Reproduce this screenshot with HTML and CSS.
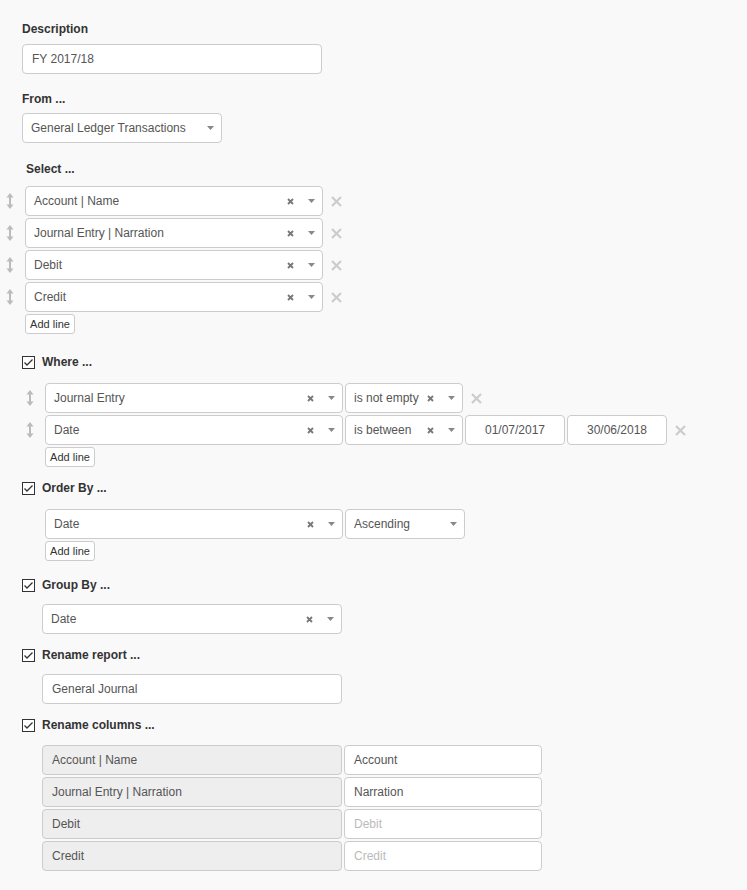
FILE: index.html
```html
<!DOCTYPE html>
<html lang="en">
<head>
    <meta charset="UTF-8">
    <title>Report query</title>
    <link rel="stylesheet" href="styles.css">
</head>
<body>
<div class="form">

    <!-- Description -->
    <div class="label">Description</div>
    <div class="field w300">FY 2017/18</div>

    <!-- From -->
    <div class="label from-label">From ...</div>
    <div class="sel w200">
        <span class="sel-text">General Ledger Transactions</span>
        <svg class="sel-arrow" width="7" height="4" viewBox="0 0 7 4"><polygon points="0,0 7,0 3.5,4" fill="#888"/></svg>
    </div>

    <!-- Select -->
    <div class="label select-label">Select ...</div>
    <div class="rows select-rows">
        <div class="row">
            <svg class="handle" width="8" height="16" viewBox="0 0 8 16"><path d="M4 0 L7.5 4.5 H5 V11.5 H7.5 L4 16 L0.5 11.5 H3 V4.5 H0.5 Z" fill="#bbb"/></svg>
            <div class="sel w298">
                <span class="sel-text">Account | Name</span>
                <svg class="sel-clear" width="7" height="7" viewBox="0 0 7 7"><path d="M1 1 L6 6 M6 1 L1 6" stroke="#777" stroke-width="1.8"/></svg>
                <svg class="sel-arrow" width="7" height="4" viewBox="0 0 7 4"><polygon points="0,0 7,0 3.5,4" fill="#888"/></svg>
            </div>
            <svg class="remove" width="11" height="11" viewBox="0 0 11 11"><path d="M1 1 L10 10 M10 1 L1 10" stroke="#ccc" stroke-width="2.2"/></svg>
        </div>
        <div class="row">
            <svg class="handle" width="8" height="16" viewBox="0 0 8 16"><path d="M4 0 L7.5 4.5 H5 V11.5 H7.5 L4 16 L0.5 11.5 H3 V4.5 H0.5 Z" fill="#bbb"/></svg>
            <div class="sel w298">
                <span class="sel-text">Journal Entry | Narration</span>
                <svg class="sel-clear" width="7" height="7" viewBox="0 0 7 7"><path d="M1 1 L6 6 M6 1 L1 6" stroke="#777" stroke-width="1.8"/></svg>
                <svg class="sel-arrow" width="7" height="4" viewBox="0 0 7 4"><polygon points="0,0 7,0 3.5,4" fill="#888"/></svg>
            </div>
            <svg class="remove" width="11" height="11" viewBox="0 0 11 11"><path d="M1 1 L10 10 M10 1 L1 10" stroke="#ccc" stroke-width="2.2"/></svg>
        </div>
        <div class="row">
            <svg class="handle" width="8" height="16" viewBox="0 0 8 16"><path d="M4 0 L7.5 4.5 H5 V11.5 H7.5 L4 16 L0.5 11.5 H3 V4.5 H0.5 Z" fill="#bbb"/></svg>
            <div class="sel w298">
                <span class="sel-text">Debit</span>
                <svg class="sel-clear" width="7" height="7" viewBox="0 0 7 7"><path d="M1 1 L6 6 M6 1 L1 6" stroke="#777" stroke-width="1.8"/></svg>
                <svg class="sel-arrow" width="7" height="4" viewBox="0 0 7 4"><polygon points="0,0 7,0 3.5,4" fill="#888"/></svg>
            </div>
            <svg class="remove" width="11" height="11" viewBox="0 0 11 11"><path d="M1 1 L10 10 M10 1 L1 10" stroke="#ccc" stroke-width="2.2"/></svg>
        </div>
        <div class="row">
            <svg class="handle" width="8" height="16" viewBox="0 0 8 16"><path d="M4 0 L7.5 4.5 H5 V11.5 H7.5 L4 16 L0.5 11.5 H3 V4.5 H0.5 Z" fill="#bbb"/></svg>
            <div class="sel w298">
                <span class="sel-text">Credit</span>
                <svg class="sel-clear" width="7" height="7" viewBox="0 0 7 7"><path d="M1 1 L6 6 M6 1 L1 6" stroke="#777" stroke-width="1.8"/></svg>
                <svg class="sel-arrow" width="7" height="4" viewBox="0 0 7 4"><polygon points="0,0 7,0 3.5,4" fill="#888"/></svg>
            </div>
            <svg class="remove" width="11" height="11" viewBox="0 0 11 11"><path d="M1 1 L10 10 M10 1 L1 10" stroke="#ccc" stroke-width="2.2"/></svg>
        </div>
    </div>
    <button class="add-line add-select">Add line</button>

    <!-- Where -->
    <div class="check-label where-label">
        <span class="checkbox"><svg width="11" height="11" viewBox="0 0 11 11"><polyline points="1.5,5.5 4,8 9.5,2.5" fill="none" stroke="#333" stroke-width="1.3"/></svg></span>
        Where ...
    </div>
    <div class="rows where-rows">
        <div class="row">
            <svg class="handle" width="8" height="16" viewBox="0 0 8 16"><path d="M4 0 L7.5 4.5 H5 V11.5 H7.5 L4 16 L0.5 11.5 H3 V4.5 H0.5 Z" fill="#bbb"/></svg>
            <div class="sel w298">
                <span class="sel-text">Journal Entry</span>
                <svg class="sel-clear" width="7" height="7" viewBox="0 0 7 7"><path d="M1 1 L6 6 M6 1 L1 6" stroke="#777" stroke-width="1.8"/></svg>
                <svg class="sel-arrow" width="7" height="4" viewBox="0 0 7 4"><polygon points="0,0 7,0 3.5,4" fill="#888"/></svg>
            </div>
            <div class="sel w118">
                <span class="sel-text">is not empty</span>
                <svg class="sel-clear" width="7" height="7" viewBox="0 0 7 7"><path d="M1 1 L6 6 M6 1 L1 6" stroke="#777" stroke-width="1.8"/></svg>
                <svg class="sel-arrow" width="7" height="4" viewBox="0 0 7 4"><polygon points="0,0 7,0 3.5,4" fill="#888"/></svg>
            </div>
            <svg class="remove" width="11" height="11" viewBox="0 0 11 11"><path d="M1 1 L10 10 M10 1 L1 10" stroke="#ccc" stroke-width="2.2"/></svg>
        </div>
        <div class="row">
            <svg class="handle" width="8" height="16" viewBox="0 0 8 16"><path d="M4 0 L7.5 4.5 H5 V11.5 H7.5 L4 16 L0.5 11.5 H3 V4.5 H0.5 Z" fill="#bbb"/></svg>
            <div class="sel w298">
                <span class="sel-text">Date</span>
                <svg class="sel-clear" width="7" height="7" viewBox="0 0 7 7"><path d="M1 1 L6 6 M6 1 L1 6" stroke="#777" stroke-width="1.8"/></svg>
                <svg class="sel-arrow" width="7" height="4" viewBox="0 0 7 4"><polygon points="0,0 7,0 3.5,4" fill="#888"/></svg>
            </div>
            <div class="sel w118">
                <span class="sel-text">is between</span>
                <svg class="sel-clear" width="7" height="7" viewBox="0 0 7 7"><path d="M1 1 L6 6 M6 1 L1 6" stroke="#777" stroke-width="1.8"/></svg>
                <svg class="sel-arrow" width="7" height="4" viewBox="0 0 7 4"><polygon points="0,0 7,0 3.5,4" fill="#888"/></svg>
            </div>
            <div class="field date">01/07/2017</div>
            <div class="field date">30/06/2018</div>
            <svg class="remove" width="11" height="11" viewBox="0 0 11 11"><path d="M1 1 L10 10 M10 1 L1 10" stroke="#ccc" stroke-width="2.2"/></svg>
        </div>
    </div>
    <button class="add-line add-where">Add line</button>

    <!-- Order By -->
    <div class="check-label order-label">
        <span class="checkbox"><svg width="11" height="11" viewBox="0 0 11 11"><polyline points="1.5,5.5 4,8 9.5,2.5" fill="none" stroke="#333" stroke-width="1.3"/></svg></span>
        Order By ...
    </div>
    <div class="rows order-rows">
        <div class="row">
            <div class="sel w298">
                <span class="sel-text">Date</span>
                <svg class="sel-clear" width="7" height="7" viewBox="0 0 7 7"><path d="M1 1 L6 6 M6 1 L1 6" stroke="#777" stroke-width="1.8"/></svg>
                <svg class="sel-arrow" width="7" height="4" viewBox="0 0 7 4"><polygon points="0,0 7,0 3.5,4" fill="#888"/></svg>
            </div>
            <div class="sel w120">
                <span class="sel-text">Ascending</span>
                <svg class="sel-arrow" width="7" height="4" viewBox="0 0 7 4"><polygon points="0,0 7,0 3.5,4" fill="#888"/></svg>
            </div>
        </div>
    </div>
    <button class="add-line add-order">Add line</button>

    <!-- Group By -->
    <div class="check-label group-label">
        <span class="checkbox"><svg width="11" height="11" viewBox="0 0 11 11"><polyline points="1.5,5.5 4,8 9.5,2.5" fill="none" stroke="#333" stroke-width="1.3"/></svg></span>
        Group By ...
    </div>
    <div class="sel w300 indent">
        <span class="sel-text">Date</span>
        <svg class="sel-clear" width="7" height="7" viewBox="0 0 7 7"><path d="M1 1 L6 6 M6 1 L1 6" stroke="#777" stroke-width="1.8"/></svg>
        <svg class="sel-arrow" width="7" height="4" viewBox="0 0 7 4"><polygon points="0,0 7,0 3.5,4" fill="#888"/></svg>
    </div>

    <!-- Rename report -->
    <div class="check-label rename-label">
        <span class="checkbox"><svg width="11" height="11" viewBox="0 0 11 11"><polyline points="1.5,5.5 4,8 9.5,2.5" fill="none" stroke="#333" stroke-width="1.3"/></svg></span>
        Rename report ...
    </div>
    <div class="field w300 indent">General Journal</div>

    <!-- Rename columns -->
    <div class="check-label rename-label columns-label">
        <span class="checkbox"><svg width="11" height="11" viewBox="0 0 11 11"><polyline points="1.5,5.5 4,8 9.5,2.5" fill="none" stroke="#333" stroke-width="1.3"/></svg></span>
        Rename columns ...
    </div>
    <div class="columns indent">
        <div class="row">
            <div class="field readonly w300">Account | Name</div>
            <div class="field w198">Account</div>
        </div>
        <div class="row">
            <div class="field readonly w300">Journal Entry | Narration</div>
            <div class="field w198">Narration</div>
        </div>
        <div class="row">
            <div class="field readonly w300">Debit</div>
            <div class="field placeholder w198">Debit</div>
        </div>
        <div class="row">
            <div class="field readonly w300">Credit</div>
            <div class="field placeholder w198">Credit</div>
        </div>
    </div>

</div>
</body>
</html>
```

FILE: styles.css
```css
/* General */
body {
    margin: 0;
    background: #f9f9f9;
    font-family: "Liberation Sans", Arial, sans-serif;
    font-size: 12px;
    color: #555;
}
.form {
    padding: 21px 0 30px 22px;
}

/* Labels */
.label {
    font-weight: bold;
    color: #333;
    line-height: 16px;
    margin-bottom: 7px;
}
.from-label {
    margin-top: 17px;
    margin-bottom: 6px;
}
.select-label {
    margin-top: 18px;
    margin-left: 4px;
    margin-bottom: 9px;
}
.check-label {
    display: flex;
    align-items: center;
    gap: 7px;
    font-weight: bold;
    color: #333;
    line-height: 16px;
    margin-top: 13px;
    margin-bottom: 13px;
}
.where-label {
    margin-top: 20px;
}
.group-label {
    margin-top: 16px;
    margin-bottom: 11px;
}
.rename-label {
    margin-bottom: 11px;
}
.columns-label {
    margin-bottom: 12px;
}
.checkbox {
    width: 11px;
    height: 11px;
    border: 1px solid #333;
    background: #fff;
    display: flex;
}

/* Inputs and selects */
.field, .sel {
    box-sizing: border-box;
    height: 30px;
    border: 1px solid #ccc;
    border-radius: 4px;
    background: #fff;
    color: #555;
    display: flex;
    align-items: center;
    flex-shrink: 0;
}
.field {
    padding: 0 9px;
}
.sel {
    padding: 0 7px 0 8px;
}
.sel-text {
    flex: 1;
    white-space: nowrap;
}
.sel-clear {
    margin-right: 14px;
}
.field.date {
    width: 100px;
    justify-content: center;
}
.field.readonly {
    background: #eee;
}
.field.placeholder {
    color: #bbb;
}
.w300 { width: 300px; }
.w298 { width: 298px; }
.w200 { width: 200px; }
.w198 { width: 198px; }
.w120 { width: 120px; }
.w118 { width: 118px; }
.indent {
    margin-left: 20px;
}

/* Rows */
.rows .row, .columns .row {
    display: flex;
    align-items: center;
    gap: 2px;
    margin-bottom: 2px;
}
.select-rows {
    margin-left: -22px;
}
.where-rows {
    margin-left: -2px;
}
.order-rows {
    margin-left: 23px;
}
.handle {
    width: 20px;
    margin-right: 3px;
    flex-shrink: 0;
}
.remove {
    margin-left: 6px;
}

/* Add line */
.add-line {
    display: block;
    box-sizing: border-box;
    width: 50px;
    height: 20px;
    padding: 0;
    margin-top: 1px;
    border: 1px solid #ccc;
    border-radius: 3px;
    background: #fff;
    font-family: "Liberation Sans", Arial, sans-serif;
    font-size: 11px;
    color: #333;
}
.add-select {
    margin-left: 3px;
}
.add-where, .add-order {
    margin-left: 23px;
}
```
